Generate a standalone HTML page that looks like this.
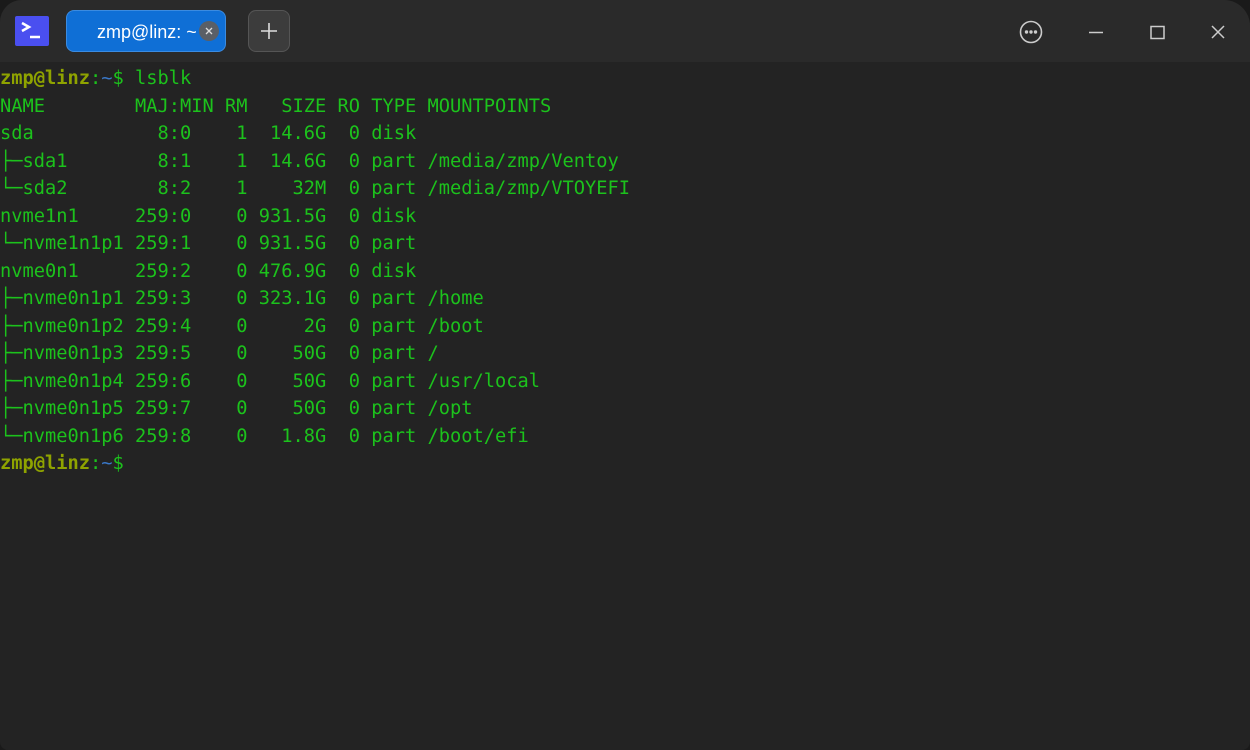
<!DOCTYPE html>
<html><head><meta charset="utf-8">
<style>
html,body{margin:0;padding:0;width:1250px;height:750px;overflow:hidden;background:#1a1a1a;}
.win{position:absolute;left:0;top:0;width:1250px;height:750px;background:#232323;border-radius:22px 26px 8px 8px;overflow:hidden;}
.bar{position:absolute;left:0;top:0;width:1250px;height:62px;background:#2a2a2a;}
.icon{position:absolute;left:15px;top:16px;width:34px;height:30px;background:#4a4ff0;border-radius:2px;}
.tab{position:absolute;left:66px;top:10px;width:160px;height:42px;background:#0f6fd6;border-radius:8px;box-sizing:border-box;border:1px solid #3b8be0;}
.tab span{position:absolute;left:30px;top:11px;color:#fff;font:18px "Liberation Sans",sans-serif;}
.tabx{position:absolute;left:199px;top:21px;width:20px;height:20px;border-radius:50%;background:#5a5f66;}
.plus{position:absolute;left:248px;top:10px;width:42px;height:42px;background:#3c3c3c;border-radius:8px;box-sizing:border-box;border:1px solid #555;}
pre{position:absolute;left:0;top:65px;margin:0;font-family:"DejaVu Sans Mono",monospace;font-size:18.7px;line-height:27.5px;color:#1cc21c;}
.u{color:#8fa300;font-weight:bold}.b{color:#3a78c8}
</style></head><body>
<div class="win">
<div class="bar">
<div class="icon"><svg width="34" height="30"><path d="M7 7 L14 11 L7 15" stroke="#fff" stroke-width="2.5" fill="none"/><path d="M15 21 H25" stroke="#fff" stroke-width="2.5"/></svg></div>
<div class="tab"><span>zmp@linz: ~</span></div>
<div class="tabx"><svg width="20" height="20"><path d="M7 7L13 13M13 7L7 13" stroke="#ddd" stroke-width="1.3"/></svg></div>
<div class="plus"><svg width="40" height="40"><path d="M20 12V28M12 20H28" stroke="#ddd" stroke-width="1.6"/></svg></div>
<svg style="position:absolute;left:1015px;top:17px" width="230" height="30">
<circle cx="16" cy="15" r="10.5" stroke="#ccc" stroke-width="1.6" fill="none"/>
<circle cx="11.5" cy="15" r="1.7" fill="#ccc"/><circle cx="16" cy="15" r="1.7" fill="#ccc"/><circle cx="20.5" cy="15" r="1.7" fill="#ccc"/>
<path d="M74 15.5H88" stroke="#ccc" stroke-width="1.5"/>
<rect x="136" y="9.5" width="13" height="12" stroke="#ccc" stroke-width="1.5" fill="none"/>
<path d="M197 9L209 21M209 9L197 21" stroke="#ccc" stroke-width="1.5"/>
</svg>
</div>
<pre><span class="u">zmp@linz</span>:<span class="b">~</span>$ lsblk
NAME        MAJ:MIN RM   SIZE RO TYPE MOUNTPOINTS
sda           8:0    1  14.6G  0 disk 
├─sda1        8:1    1  14.6G  0 part /media/zmp/Ventoy
└─sda2        8:2    1    32M  0 part /media/zmp/VTOYEFI
nvme1n1     259:0    0 931.5G  0 disk 
└─nvme1n1p1 259:1    0 931.5G  0 part 
nvme0n1     259:2    0 476.9G  0 disk 
├─nvme0n1p1 259:3    0 323.1G  0 part /home
├─nvme0n1p2 259:4    0     2G  0 part /boot
├─nvme0n1p3 259:5    0    50G  0 part /
├─nvme0n1p4 259:6    0    50G  0 part /usr/local
├─nvme0n1p5 259:7    0    50G  0 part /opt
└─nvme0n1p6 259:8    0   1.8G  0 part /boot/efi
<span class="u">zmp@linz</span>:<span class="b">~</span>$ </pre>
</div>
</body></html>
